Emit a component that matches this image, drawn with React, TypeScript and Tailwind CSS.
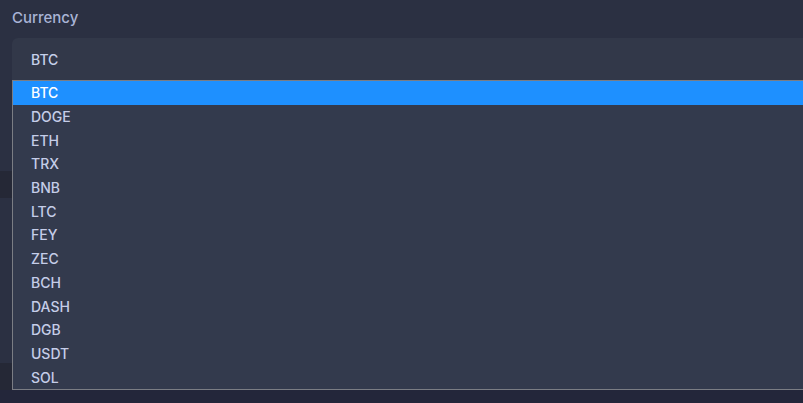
import React from "react"

const currencies = ["BTC", "DOGE", "ETH", "TRX", "BNB", "LTC", "FEY", "ZEC", "BCH", "DASH", "DGB", "USDT", "SOL"]

export default function App() {
  const selected = "BTC"

  return (
    <div className="relative h-[403px] w-[803px] overflow-hidden bg-[#2b3042] font-['Inter',sans-serif]">
      {/* form behind the open list */}
      <div className="flex flex-col">
        <div className="h-[38px] px-3 pt-[7px] text-[15px] font-medium text-[#a9b4d6]">Currency</div>
        <div className="ml-3 flex h-[42px] items-center rounded-tl-[6px] bg-[#323849] pl-[19px] text-[14px] font-medium text-[#c6d0ea]">
          {selected}
        </div>
        <div className="h-[91px]" />
        <div className="h-[27px] bg-[#252836]" />
        <div className="h-[165px]" />
        <div className="h-[27px] bg-[#252836]" />
        <div className="h-[13px] bg-[#23263a]" />
      </div>

      {/* open dropdown */}
      <ul className="absolute left-3 top-[80px] w-[800px] border border-[#7b7d84] bg-[#333a4d] text-[14px] font-medium text-[#c5cde8]">
        {currencies.map((c) => (
          <li
            key={c}
            className={
              c === selected
                ? "flex h-[23.7px] items-center bg-[#1e90ff] pl-[18px] text-white"
                : "flex h-[23.7px] items-center pl-[18px]"
            }
          >
            {c}
          </li>
        ))}
      </ul>
    </div>
  )
}
